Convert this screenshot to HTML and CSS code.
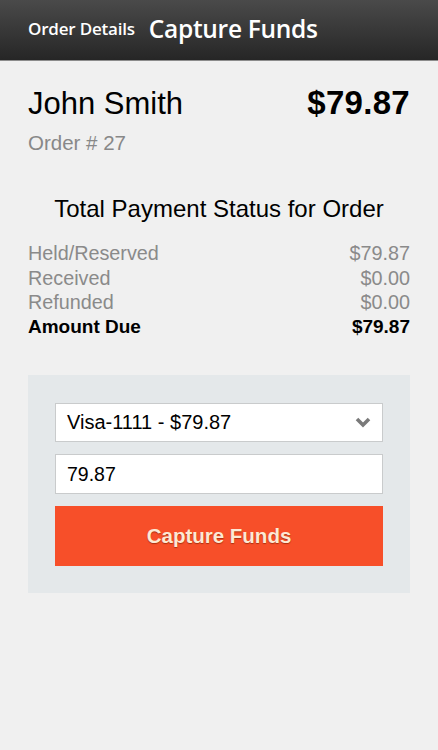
FILE: index.html
```html
<!DOCTYPE html>
<html>
<head>
<meta charset="utf-8">
<link rel="stylesheet" href="styles.css">
</head>
<body>
<header class="topbar">
  <span class="back">Order Details</span>
  <span class="title">Capture Funds</span>
</header>
<main class="content">
  <section class="customer">
    <div class="customer-row">
      <h1 class="name">John Smith</h1>
      <div class="total">$79.87</div>
    </div>
    <div class="order-no">Order # 27</div>
  </section>
  <section class="status">
    <h2 class="status-title">Total Payment Status for Order</h2>
    <div class="status-list">
      <div class="status-row"><span>Held/Reserved</span><span>$79.87</span></div>
      <div class="status-row"><span>Received</span><span>$0.00</span></div>
      <div class="status-row"><span>Refunded</span><span>$0.00</span></div>
      <div class="status-row due"><span>Amount Due</span><span>$79.87</span></div>
    </div>
  </section>
  <section class="panel">
    <div class="select">
      <span>Visa-1111 - $79.87</span>
      <svg class="chev" width="16" height="11" viewBox="0 0 16 11"><path d="M2 2 L8 8 L14 2" fill="none" stroke="#7a7a7a" stroke-width="3.6" stroke-linejoin="miter"/></svg>
    </div>
    <div class="field">79.87</div>
    <div class="button">Capture Funds</div>
  </section>
</main>
</body>
</html>
```
FILE: styles.css
```css
* { box-sizing: border-box; }
html, body { margin: 0; padding: 0; }
body {
  width: 438px;
  height: 750px;
  background: #f0f0f0;
  font-family: "Liberation Sans", Arial, sans-serif;
  color: #000;
}
.topbar {
  height: 61px;
  background: linear-gradient(#4a4a4a, #262626);
  border-bottom: 1px solid #8c8c8c;
  display: flex;
  align-items: center;
  padding: 0 0 4px 28px;
  gap: 14px;
  color: #fff;
  font-family: "Open Sans", "Lato", sans-serif;
  font-weight: 600;
}
.back { font-size: 17px; letter-spacing: -0.2px; }
.title { font-size: 24.5px; letter-spacing: -0.3px; }
.content { padding: 0 28px; }
.customer { padding-top: 24px; }
.customer-row {
  display: flex;
  justify-content: space-between;
  align-items: baseline;
}
.name { margin: 0; font-size: 31px; font-weight: normal; line-height: 36px; }
.total { font-size: 33px; font-weight: bold; line-height: 36px; letter-spacing: 0.3px; }
.order-no { color: #888; font-size: 20.5px; line-height: 24px; margin-top: 9px; }
.status { margin-top: 40px; }
.status-title {
  margin: 0;
  text-align: center;
  font-weight: normal;
  font-size: 24px;
  line-height: 28px;
}
.status-list { margin-top: 18px; }
.status-row {
  display: flex;
  justify-content: space-between;
  font-size: 19.8px;
  line-height: 24.6px;
  color: #8a8a8a;
}
.status-row.due { color: #000; font-weight: bold; font-size: 19px; }
.panel {
  margin-top: 36px;
  background: #e4e8ea;
  padding: 28px 27px 27px 27px;
  display: flex;
  flex-direction: column;
}
.select, .field {
  height: 39px;
  background: #fff;
  border: 1px solid #c9cbcc;
  display: flex;
  align-items: center;
  padding: 0 11px;
  font-size: 19.5px;
}
.select { justify-content: space-between; }
.select span { font-size: 20px; }
.chev { display: block; }
.field { margin-top: 12px; height: 40px; }
.button {
  margin-top: 12px;
  height: 60px;
  background: #f74f29;
  color: #fde9d4;
  font-weight: bold;
  font-size: 20.5px;
  display: flex;
  align-items: center;
  justify-content: center;
  text-shadow: 0 1px 1px rgba(120, 30, 0, 0.6);
}
```
